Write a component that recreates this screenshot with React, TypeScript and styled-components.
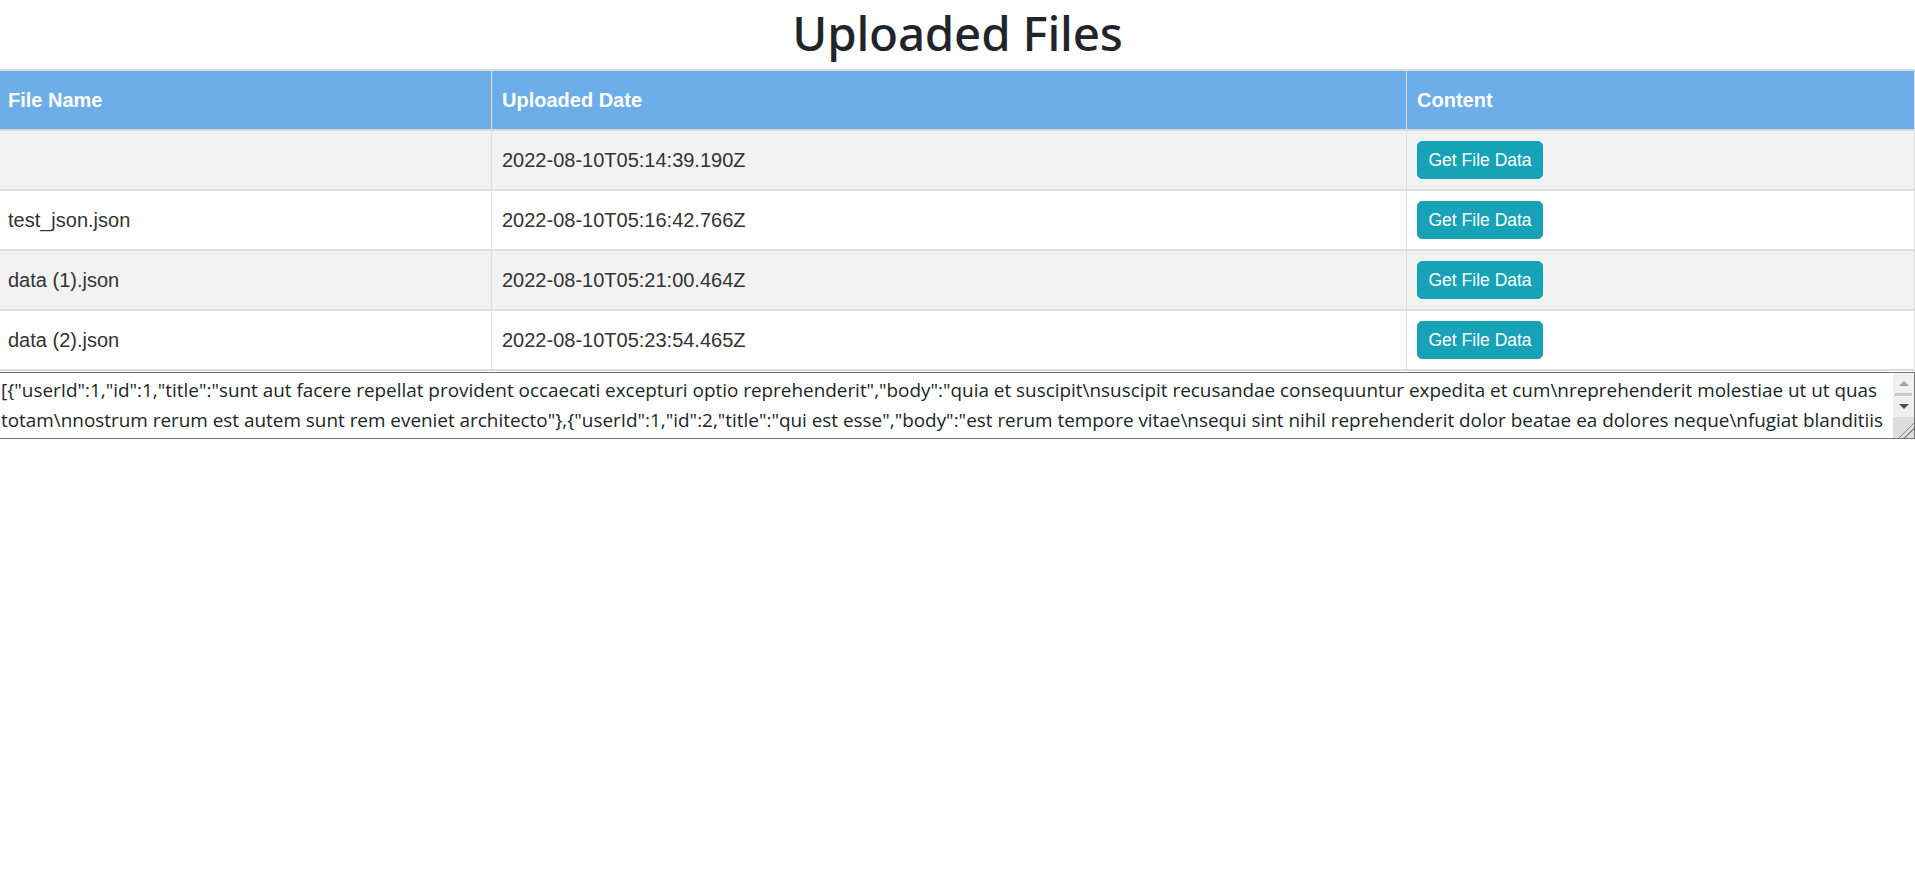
import React from 'react';
import { styled, createGlobalStyle } from 'styled-components';

const files = [
  { name: '', date: '2022-08-10T05:14:39.190Z' },
  { name: 'test_json.json', date: '2022-08-10T05:16:42.766Z' },
  { name: 'data (1).json', date: '2022-08-10T05:21:00.464Z' },
  { name: 'data (2).json', date: '2022-08-10T05:23:54.465Z' },
];

const fileData =
  '[{"userId":1,"id":1,"title":"sunt aut facere repellat provident occaecati excepturi optio reprehenderit","body":"quia et suscipit\\nsuscipit recusandae consequuntur expedita et cum\\nreprehenderit molestiae ut ut quas totam\\nnostrum rerum est autem sunt rem eveniet architecto"},{"userId":1,"id":2,"title":"qui est esse","body":"est rerum tempore vitae\\nsequi sint nihil reprehenderit dolor beatae ea dolores neque\\nfugiat blanditiis voluptate porro vel nihil molestiae ut reiciendis\\nqui aperiam non debitis possimus qui neque nisi nulla"},{"userId":1,"id":3,"title":"ea molestias quasi exercitationem repellat qui ipsa sit aut","body":"et iusto sed quo iure\\nvoluptatem occaecati omnis eligendi aut ad\\nvoluptatem doloribus vel accusantium quis pariatur\\nmolestiae porro eius odio et labore et velit aut"}]';

const App = () => {
  return (
    <>
      <GlobalStyle />
      <StPage>
        <StTitle>Uploaded Files</StTitle>
        <StContent>
          <StTable>
            <thead>
              <tr>
                <StHeadCell $width={494}>File Name</StHeadCell>
                <StHeadCell $width={915}>Uploaded Date</StHeadCell>
                <StHeadCell>Content</StHeadCell>
              </tr>
            </thead>
            <tbody>
              {files.map((file, i) => (
                <StRow key={file.date} $striped={i % 2 === 0}>
                  <StCell>{file.name}</StCell>
                  <StCell>{file.date}</StCell>
                  <StCell>
                    <StGetButton>Get File Data</StGetButton>
                  </StCell>
                </StRow>
              ))}
            </tbody>
          </StTable>
          <StAreaWrap>
            <StDataArea readOnly value={fileData} />
            {/* headless browser hides native scrollbars, so draw the classic one */}
            <StScrollbar>
              <StScrollButton>
                <StArrow $dir="up" />
              </StScrollButton>
              <StThumb />
              <StScrollButton>
                <StArrow $dir="down" />
              </StScrollButton>
              <StResizer />
            </StScrollbar>
          </StAreaWrap>
        </StContent>
      </StPage>
    </>
  );
};

export default App;

const GlobalStyle = createGlobalStyle`
  body {
    margin: 0;
    background: #fff;
    color: #212529;
    font-family: 'Open Sans', 'Noto Sans', sans-serif;
  }
`;

const StPage = styled.div`
  display: flex;
  flex-direction: column;
  width: 100%;
  overflow: hidden;
`;

const StTitle = styled.h1`
  margin: 0 0 3px;
  line-height: 66px;
  text-align: center;
  font-family: 'Noto Sans', 'Open Sans', sans-serif;
  font-size: 47.5px;
  font-weight: 500;
  color: #212529;
  letter-spacing: -0.2px;
`;

const StContent = styled.div`
  display: flex;
  flex-direction: column;
  margin-left: -3px;
  width: calc(100% + 3px);
`;

const StTable = styled.table`
  width: 100%;
  border-collapse: collapse;
  table-layout: fixed;
  font-family: 'Liberation Sans', Arial, sans-serif;
  font-size: 20px;
  color: #333;
`;

const StHeadCell = styled.th<{ $width?: number }>`
  box-sizing: border-box;
  width: ${({ $width }) => ($width ? `${$width}px` : 'auto')};
  height: 60px;
  padding: 0 10px;
  text-align: left;
  font-weight: 700;
  color: #fff;
  background: #6daee8;
  border-top: 2px solid #dcdcdc;
  border-bottom: 2px solid #dcdcdc;
  border-left: 1px solid #e2e2e2;
  border-right: 1px solid #e2e2e2;
`;

const StRow = styled.tr<{ $striped: boolean }>`
  background: ${({ $striped }) => ($striped ? '#f2f2f2' : '#fff')};
`;

const StCell = styled.td`
  box-sizing: border-box;
  height: 60px;
  padding: 0 10px;
  vertical-align: middle;
  border-bottom: 2px solid #dcdcdc;
  border-left: 1px solid #dedede;
  border-right: 1px solid #dedede;
`;

const StGetButton = styled.button`
  display: inline-block;
  padding: 7.5px 10.5px;
  font-family: 'Liberation Sans', Arial, sans-serif;
  font-size: 17.5px;
  line-height: 21px;
  color: #fff;
  background: #17a2b8;
  border: 1px solid #17a2b8;
  border-radius: 5px;
  cursor: pointer;
`;

const StAreaWrap = styled.div`
  position: relative;
  margin-top: 1px;
`;

const StDataArea = styled.textarea`
  display: block;
  box-sizing: border-box;
  width: 100%;
  height: 67px;
  margin: 0;
  padding: 2px 21px 2px 3px;
  font-family: 'Open Sans', 'Noto Sans', sans-serif;
  font-size: 18.9px;
  line-height: 30px;
  color: #212529;
  background: #fff;
  border: 1px solid #767676;
  resize: none;
  overflow: hidden;
`;

const StScrollbar = styled.div`
  position: absolute;
  top: 1px;
  right: 1px;
  bottom: 1px;
  width: 21px;
  display: flex;
  flex-direction: column;
  background: #f0f0f0;
`;

const StScrollButton = styled.div`
  height: 20px;
  display: flex;
  align-items: center;
  justify-content: center;
`;

const StArrow = styled.span<{ $dir: 'up' | 'down' }>`
  width: 0;
  height: 0;
  border-left: 5px solid transparent;
  border-right: 5px solid transparent;
  ${({ $dir }) =>
    $dir === 'up' ? 'border-bottom: 5px solid #a3a3a3;' : 'border-top: 5px solid #505050;'}
`;

const StThumb = styled.div`
  height: 3px;
  margin: 0 2px;
  background: #c8c8c8;
`;

const StResizer = styled.div`
  margin-top: auto;
  height: 21px;
  background: linear-gradient(
      135deg,
      transparent 0 62%,
      #8a8a8a 62% 66%,
      transparent 66% 76%,
      #8a8a8a 76% 80%,
      transparent 80%
    ),
    #dcdcdc;
`;
